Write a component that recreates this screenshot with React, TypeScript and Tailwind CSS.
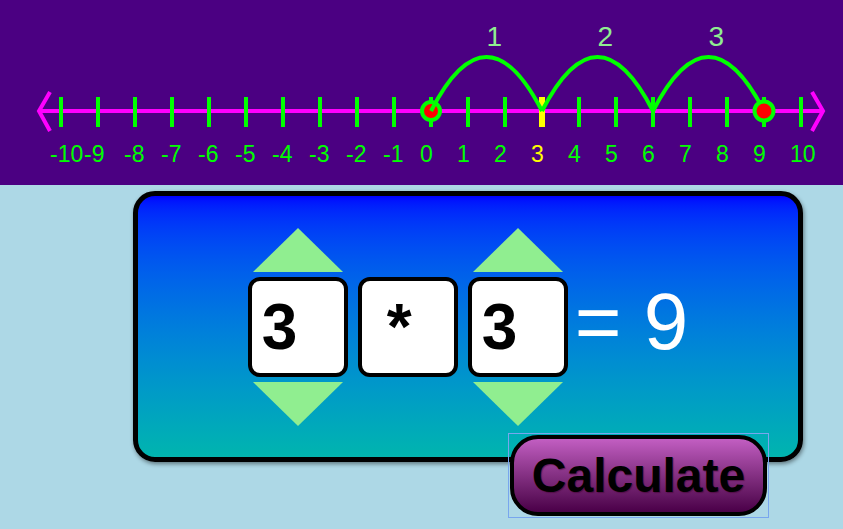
import React from 'react';

const TICKS = Array.from({ length: 21 }, (_, i) => i - 10);
const tickX = (n: number) => 61 + 37 * (n + 10);
const JUMPS = [0, 3, 6];

function NumberLine() {
  return (
    <svg width="843" height="185" viewBox="0 0 843 185" className="block">
      <line x1="38" y1="111" x2="823" y2="111" stroke="#ff00ff" strokeWidth="4" />
      <polyline points="50,92 39,111 50,131" fill="none" stroke="#ff00ff" strokeWidth="4" />
      <polyline points="812,92 823,111 812,131" fill="none" stroke="#ff00ff" strokeWidth="4" />

      {TICKS.map((n) => (
        <line
          key={n}
          x1={tickX(n)}
          y1="97"
          x2={tickX(n)}
          y2="127"
          stroke={n === 3 ? '#ffff00' : '#00ff00'}
          strokeWidth={n === 3 ? 6 : 4}
        />
      ))}

      {TICKS.map((n) => (
        <text
          key={'l' + n}
          x={n === -9 ? 84 : tickX(n) - 11}
          y="162"
          fill={n === 3 ? '#ffff00' : '#00ff00'}
          fontSize="23"
          fontFamily="'Liberation Sans', Arial, sans-serif"
        >
          {n}
        </text>
      ))}

      {/* start point */}
      <circle cx={tickX(0)} cy="111" r="9" fill="#ff0000" stroke="#00ff00" strokeWidth="4" />

      {JUMPS.map((s, i) => {
        const a = tickX(s);
        const b = tickX(s + 3);
        const m = (a + b) / 2;
        return (
          <g key={s}>
            <path d={`M${a} 111 Q${m} 3 ${b} 111`} fill="none" stroke="#00ff00" strokeWidth="4" />
            <text
              x={m}
              y="46"
              fill="#90ee90"
              fontSize="28"
              fontFamily="'Liberation Sans', Arial, sans-serif"
            >
              {i + 1}
            </text>
          </g>
        );
      })}

      {/* end point */}
      <circle cx={tickX(9)} cy="111" r="9.5" fill="#ff0000" stroke="#00ff00" strokeWidth="4" />
    </svg>
  );
}

function Stepper({ value }: { value: string }) {
  return (
    <div className="flex flex-col items-center gap-[5px]">
      <div className="w-0 h-0 border-l-[45px] border-r-[45px] border-b-[44px] border-l-transparent border-r-transparent border-b-[#90ee90]" />
      <div className="w-[100px] h-[100px] bg-white border-4 border-black rounded-[12px] flex items-center pl-[10px] text-[64px] font-bold text-black">
        {value}
      </div>
      <div className="w-0 h-0 border-l-[45px] border-r-[45px] border-t-[44px] border-l-transparent border-r-transparent border-t-[#90ee90]" />
    </div>
  );
}

export default function App() {
  return (
    <div className="w-[843px] h-[529px] bg-[#add8e6] overflow-hidden font-['Liberation_Sans',Arial,sans-serif]">
      <div className="h-[185px] bg-[#4b0082]">
        <NumberLine />
      </div>

      <div className="ml-[133px] mt-[6px] w-[670px] h-[271px] border-[5px] border-black rounded-[22px] bg-gradient-to-b from-[#0000ff] to-[#05b5ae] shadow-[1px_2px_4px_rgba(0,0,0,0.45)] flex items-center justify-center gap-[10px]">
        <Stepper value="3" />
        <div className="w-[100px] h-[100px] bg-white border-4 border-black rounded-[12px] flex items-center pl-[25px] text-[64px] font-bold text-black">
          *
        </div>
        <Stepper value="3" />
        <div className="-ml-[3px] mb-[10px] text-[80px] text-white leading-none">= 9</div>
      </div>

      <div className="ml-[508px] -mt-[29px] w-[261px] border border-[#78a6ee] p-px">
        <button className="w-[257px] h-[81px] border-4 border-black rounded-[28px] bg-gradient-to-b from-[#c25ec2] to-[#4a0048] text-[48px] font-bold text-black leading-none [text-shadow:1px_1px_1px_rgba(60,0,40,0.5)]">
          Calculate
        </button>
      </div>
    </div>
  );
}
